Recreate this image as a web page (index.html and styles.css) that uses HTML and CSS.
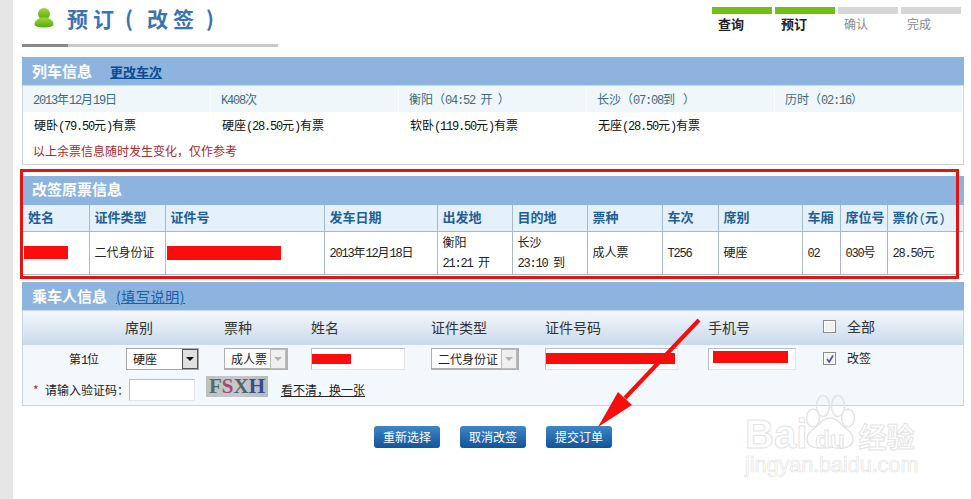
FILE: index.html
```html
<!DOCTYPE html>
<html lang="zh-CN">
<head>
<meta charset="utf-8">
<title>预订（改签）</title>
<link rel="stylesheet" href="styles.css">
</head>
<body>
<div class="page">
  <header class="top">
    <div class="brand">
      <svg class="user" viewBox="0 0 20 20" width="20" height="20"><defs><linearGradient id="g" x1="0" y1="0" x2="0" y2="1"><stop offset="0" stop-color="#9bd63a"/><stop offset="1" stop-color="#58ab0e"/></linearGradient></defs><ellipse cx="10" cy="6" rx="6" ry="6" fill="url(#g)"/><path d="M.5 16.500c0-4 4-6 7-7h5c3 1 7 3 7 7 0 2-4 3-9.500 3S.5 18.500.5 16.500z" fill="url(#g)"/></svg>
      <h1>预订<i class="po">(</i>改签<i class="pc">)</i></h1>
    </div>
    <ol class="steps">
      <li class="done">查询</li>
      <li class="done">预订</li>
      <li>确认</li>
      <li>完成</li>
    </ol>
  </header>
  <div class="rule"><i></i></div>

  <section class="panel first">
    <h2>列车信息<a href="#" class="change">更改车次</a></h2>
    <div class="info">
      <span><b class="n">2013</b>年<b class="n">12</b>月<b class="n">19</b>日</span>
      <span><b class="n">K408</b>次</span>
      <span>衡阳（<b class="n">04:52</b>&nbsp;&nbsp;开&nbsp;&nbsp;）</span>
      <span>长沙（<b class="n">07:08</b>到&nbsp;&nbsp;&nbsp;）</span>
      <span>历时（<b class="n">02:16</b>）</span>
    </div>
    <div class="seats">
      <span>硬卧<b class="n">(79.50</b>元<b class="n">)</b>有票</span>
      <span>硬座<b class="n">(28.50</b>元<b class="n">)</b>有票</span>
      <span>软卧<b class="n">(119.50</b>元<b class="n">)</b>有票</span>
      <span>无座<b class="n">(28.50</b>元<b class="n">)</b>有票</span>
      <span></span>
    </div>
    <p class="warn">以上余票信息随时发生变化，仅作参考</p>
  </section>

  <section class="panel second">
    <h2>改签原票信息</h2>
    <table class="ticket">
      <colgroup><col class="c1"><col class="c2"><col class="c3"><col class="c4"><col class="c5"><col class="c5"><col class="c5"><col class="c6"><col class="c7"><col class="c8"><col class="c9"><col></colgroup>
      <thead>
        <tr><th>姓名</th><th>证件类型</th><th>证件号</th><th>发车日期</th><th>出发地</th><th>目的地</th><th>票种</th><th>车次</th><th>席别</th><th>车厢</th><th>席位号</th><th>票价<b class="n">(</b>元<b class="n">)</b></th></tr>
      </thead>
      <tbody>
        <tr>
          <td class="bare"><span class="mask m-name"></span></td>
          <td>二代身份证</td>
          <td class="bare"><span class="mask m-id"></span></td>
          <td><b class="n">2013</b>年<b class="n">12</b>月<b class="n">18</b>日</td>
          <td class="two">衡阳<br><b class="n">21:21</b>&nbsp;&nbsp;开</td>
          <td class="two">长沙<br><b class="n">23:10</b>&nbsp;&nbsp;到</td>
          <td>成人票</td>
          <td><b class="n">T256</b></td>
          <td>硬座</td>
          <td><b class="n">02</b></td>
          <td><b class="n">030</b>号</td>
          <td><b class="n">28.50</b>元</td>
        </tr>
      </tbody>
    </table>
  </section>

  <section class="panel third">
    <h2>乘车人信息<a href="#" class="explain">(填写说明)</a></h2>
    <div class="grid labels">
      <span></span><span>席别</span><span>票种</span><span>姓名</span><span>证件类型</span><span>证件号码</span><span>手机号</span>
      <span class="check"><i class="box"></i>全部</span>
    </div>
    <div class="grid fields">
      <span class="seq">第<b class="n">1</b>位</span>
      <span class="sel w73">硬座<i class="arrow on"></i></span>
      <span class="sel w64 off">成人票<i class="arrow"></i></span>
      <span class="inp w94"><i class="mask m-a"></i></span>
      <span class="sel w88 off">二代身份证<i class="arrow"></i></span>
      <span class="inp w133"><i class="mask m-b"></i></span>
      <span class="inp w88"><i class="mask m-c"></i></span>
      <span class="check"><i class="box ticked"><svg viewBox="0 0 10 10" width="10" height="10"><path d="M2 5l2.200 3L8 1.500" fill="none" stroke="#4a5590" stroke-width="1.600"/></svg></i>改签</span>
    </div>
    <div class="code">
      <em>*</em> 请输入验证码：<span class="inp w66"></span>
      <span class="captcha"><u>F</u><s>S</s><b>X</b><i>H</i></span>
      <a href="#">看不清，换一张</a>
    </div>
  </section>

  <div class="actions">
    <a href="#" class="btn">重新选择</a>
    <a href="#" class="btn">取消改签</a>
    <a href="#" class="btn">提交订单</a>
  </div>

  <div class="highlight"></div>
  <div class="mark">
    <svg class="paw" viewBox="0 0 50 56" width="50" height="56" fill="none" stroke="#e4e4e4" stroke-width="1.500"><ellipse cx="18" cy="12" rx="6.500" ry="10.500"/><ellipse cx="33" cy="12" rx="6.500" ry="10.500"/><ellipse cx="8" cy="24" rx="6.500" ry="9"/><ellipse cx="43" cy="24" rx="6.500" ry="9"/><path d="M25 24c6 0 9 4 14 9 5 4 9 7 9 12 0 6-5 9-11 9-5 0-8-1-12-1s-7 1-12 1c-6 0-11-3-11-9 0-5 4-8 9-12 5-5 8-9 14-9z"/></svg>
    <div class="mark-main"><span>Bai</span><span class="du">du</span><span class="cn">经验</span></div>
    <div class="mark-sub">jingyan.baidu.com</div>
  </div>
  <svg class="pointer" viewBox="0 0 120 130" width="120" height="130"><path d="M109 10L35 88" stroke="#f70d0d" stroke-width="4" fill="none"/><path d="M8 117L28 82 42 95z" fill="#f70d0d"/></svg>
</div>
</body>
</html>
```
FILE: styles.css
```css
* { box-sizing: border-box; }
html, body { margin: 0; padding: 0; }
body {
  width: 971px;
  height: 499px;
  overflow: hidden;
  background: #fff;
  font: 12px/18px "Noto Sans CJK SC", "Liberation Sans", sans-serif;
  color: #222;
}
a { color: inherit; }
.n {
  font: normal 12px/1 "Liberation Mono", monospace;
  letter-spacing: -1.2px;
}
.page {
  position: relative;
  width: 971px;
  height: 499px;
  padding: 0 7px 0 9px;
  border-left: 13px solid #e6e6e6;
}
.top {
  display: flex;
  justify-content: space-between;
  height: 44px;
}
.brand {
  display: flex;
  align-items: flex-start;
  gap: 13px;
  padding: 8px 0 0 12px;
}
.user { flex: none; }
h1 {
  margin: -2px 0 0;
  font-size: 21px;
  line-height: 24px;
  font-weight: 700;
  color: #3a73ad;
  letter-spacing: 5px;
  white-space: nowrap;
}
h1 i { font-style: normal; }
.po { margin: 0 9px 0 6px; }
.pc { margin-left: 7px; }
.steps {
  list-style: none;
  display: flex;
  gap: 3px;
  margin: 7px 3px 0 0;
  padding: 0;
}
.steps li {
  width: 60px;
  border-top: 7px solid #d6d6d6;
  padding: 1px 0 0 6px;
  color: #8a8a8a;
  line-height: 18px;
}
.steps .done { border-top-color: #72c015; color: #222; font-weight: 700; font-size: 13px; }
.rule {
  width: 256px;
  height: 3px;
  background: #c8c8c8;
  margin-bottom: 10px;
}
.rule i { display: block; width: 46px; height: 3px; background: #8a8a8a; }

.panel {
  width: 942px;
  border: 1px solid #c7d6de;
  border-top: 0;
  background: #fff;
}
.panel h2 {
  margin: 0 -1px;
  font-size: 15px;
  font-weight: 700;
  color: #fff;
  background: #8cb4df;
  border-bottom: 1px solid #c9dcec;
  padding-left: 10px;
}
.first { height: 108px; margin-bottom: 11px; }
.first h2 { height: 29px; line-height: 28px; }
.change { margin-left: 18px; font-size: 13px; color: #0d4a94; }
.info, .seats { display: grid; grid-template-columns: repeat(5, 188px); }
.info { height: 26px; color: #3b6c7e; background: #f0f7fb; }
.info span { padding-left: 10px; line-height: 25px; border-right: 1px solid #fafdff; }
.seats { height: 26px; color: #111; }
.seats span { padding-left: 11px; line-height: 26px; }
.warn { margin: 0; padding: 0 0 0 10px; color: #a92a2a; line-height: 26px; }

.second { height: 96px; margin-bottom: 10px; border-bottom: 0; }
.second h2 { height: 29px; line-height: 26px; border: 0; }
.ticket { width: 100%; table-layout: fixed; border-collapse: collapse; }
.c1 { width: 66px; } .c2 { width: 76px; } .c3 { width: 159px; } .c4 { width: 113px; }
.c5 { width: 75px; } .c6 { width: 56px; } .c7 { width: 84px; } .c8 { width: 38px; } .c9 { width: 47px; }
.ticket th, .ticket td {
  border: 1px solid #a9bac6;
  border-top: 0;
  padding: 0 0 2px 5px;
  text-align: left;
  white-space: nowrap;
}
.ticket th:first-child, .ticket td:first-child { border-left: 0; }
.ticket th:last-child, .ticket td:last-child { border-right: 0; }
.ticket th {
  height: 26px;
  background: #e4f0fa;
  color: #1f5e94;
  font-size: 13px;
  font-weight: 700;
}
.ticket th .n { font-size: 13px; letter-spacing: -1.300px; }
.ticket td { height: 40px; color: #222; }
.ticket .two { line-height: 20px; }
.ticket .bare { padding: 0; }
.mask { display: block; background: #fc0d0d; }
.m-name { width: 44px; height: 13px; margin-left: 1px; }
.m-id { width: 114px; height: 14px; margin-left: 1px; }

.third { height: 124px; border-top: 0; background: #f3f8fd; }
.third h2 { height: 29px; line-height: 28px; }
.explain { margin-left: 9px; font-size: 14px; font-weight: 400; letter-spacing: 0.600px; color: #1b5fa6; }
.grid {
  display: grid;
  grid-template-columns: 102px 99px 87px 120px 114px 163px 114px 1fr;
  align-items: center;
}
.labels {
  height: 34px;
  font-size: 14px;
  padding-bottom: 2px;
  color: #333;
  background: linear-gradient(#f4f8fc, #c9d9ea);
}
.fields { height: 30px; padding-top: 3px; align-items: start; color: #222; }
.seq { padding-left: 46px; line-height: 22px; }
.check { display: flex; align-items: center; gap: 11px; padding-left: 1px; }
.box {
  display: block;
  width: 13px;
  height: 13px;
  border: 1px solid #8b8b8b;
  background: #f2f2f2;
  box-shadow: inset 0 0 0 1px #fff;
}
.box svg { display: block; margin: 1px; }
.labels .check { padding-bottom: 2px; }
.fields .check { line-height: 20px; }
.sel {
  display: flex;
  align-items: center;
  height: 22px;
  border: 1px solid #a6a6a6;
  background: #fff;
  padding-left: 6px;
  position: relative;
  white-space: nowrap;
}
.arrow {
  position: absolute;
  right: 0;
  top: 0;
  width: 16px;
  height: 20px;
  background: #efefef;
  border: 1px solid #bdbdbd;
}
.arrow::after {
  content: "";
  position: absolute;
  left: 3px;
  top: 7px;
  border: 4px solid transparent;
  border-bottom: 0;
  border-top: 4px solid #b3b3b3;
}
.arrow.on { border-color: #555; background: #e0e0e0; }
.arrow.on::after { border-top-color: #111; }
.off { border-width: 1px 2px 2px 1px; border-color: #b0b0b0; }
.w73 { width: 73px; margin-left: 1px; } .w64 { width: 64px; } .w88 { width: 88px; } .w94 { width: 94px; } .w133 { width: 133px; } .w66 { width: 66px; }
.inp {
  display: block;
  height: 22px;
  background: #fff;
  border: 1px solid #e4e4e4;
  border-top-color: #bdbdbd;
  border-left-color: #bdbdbd;
}
.m-a { width: 39px; height: 10px; margin: 5px 0 0 0; }
.m-b { width: 129px; height: 11px; margin: 4px 0 0 0; }
.m-c { width: 75px; height: 12px; margin: 2px 0 0 4px; }
.code { display: flex; align-items: flex-start; height: 32px; padding: 3px 0 0 10px; color: #222; line-height: 24px; }
.code em { color: #a92a2a; font-style: normal; width: 12px; line-height: 24px; }
.code .inp { height: 22px; margin: 1px 0 0 0; }
.captcha {
  width: 62px;
  height: 21px;
  margin: -2px 0 0 11px;
  background: linear-gradient(90deg, #bcc2c2, #c8c8ce 50%, #b6bcc0);
  font: 700 21px/20px "Liberation Serif", serif;
  display: flex;
  justify-content: center;
  color: #51706a;
}
.captcha u, .captcha s, .captcha b, .captcha i { text-decoration: none; font-style: normal; font-weight: 700; }
.captcha s { color: #a04f6a; }
.captcha b { color: #4a6a66; }
.captcha i { color: #3a4a8a; }
.code a { margin-left: 13px; }

.actions {
  display: flex;
  justify-content: flex-start;
  gap: 20px;
  padding: 20px 0 0 352px;
}
.btn {
  display: block;
  width: 66px;
  height: 22px;
  line-height: 22px;
  text-align: center;
  color: #fff;
  text-decoration: none;
  border-radius: 3px;
  background: linear-gradient(#3d86c9, #125498);
}

.highlight {
  position: absolute;
  left: 7px;
  top: 169px;
  width: 939px;
  height: 110px;
  border: 3px solid #e51414;
}
.pointer { position: absolute; left: 577px; top: 310px; }
.mark { position: absolute; left: 732px; top: 394px; width: 180px; height: 90px; color: #fff; }
.paw { position: absolute; left: 60px; top: 0; }
.mark-main {
  position: absolute;
  left: 0;
  top: 18px;
  font: 700 40px/44px "Liberation Sans", sans-serif;
  -webkit-text-stroke: 1px #e4e4e4;
  white-space: nowrap;
}
.mark-main .du { font-size: 24px; margin: 0 14px 0 8px; }
.mark-main .cn { font: 700 28px/44px "Noto Sans CJK SC", sans-serif; }
.mark-sub {
  position: absolute;
  left: 0;
  top: 59px;
  font: 400 21.500px/24px "Liberation Sans", sans-serif;
  -webkit-text-stroke: 0.7px #e4e4e4;
  white-space: nowrap;
}
```
